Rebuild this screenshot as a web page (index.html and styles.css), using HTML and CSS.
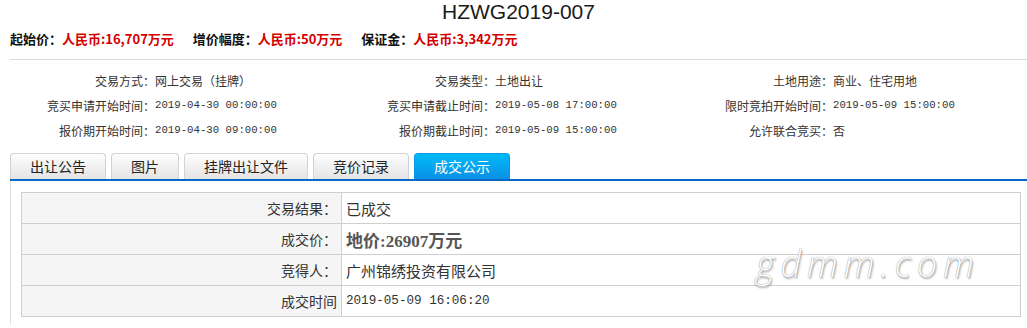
FILE: index.html
```html
<!DOCTYPE html>
<html>

<head>
    <title>HZWG2019-007</title>
    <link rel="stylesheet" href="styles.css">
</head>

<body>
    <div class="page">
        <h1 class="title">HZWG2019-007</h1>

        <div class="price-line">
            <span class="price-label">起始价：</span><span class="price-value">人民币:16,707万元</span>
            <span class="price-label">增价幅度：</span><span class="price-value">人民币:50万元</span>
            <span class="price-label">保证金：</span><span class="price-value">人民币:3,342万元</span>
        </div>

        <div class="info">
            <div class="info-label">交易方式：</div>
            <div class="info-value">网上交易（挂牌）</div>
            <div class="info-label">交易类型：</div>
            <div class="info-value">土地出让</div>
            <div class="info-label">土地用途：</div>
            <div class="info-value">商业、住宅用地</div>

            <div class="info-label">竞买申请开始时间：</div>
            <div class="info-value num">2019-04-30 00:00:00</div>
            <div class="info-label">竞买申请截止时间：</div>
            <div class="info-value num">2019-05-08 17:00:00</div>
            <div class="info-label">限时竞拍开始时间：</div>
            <div class="info-value num">2019-05-09 15:00:00</div>

            <div class="info-label">报价期开始时间：</div>
            <div class="info-value num">2019-04-30 09:00:00</div>
            <div class="info-label">报价期截止时间：</div>
            <div class="info-value num">2019-05-09 15:00:00</div>
            <div class="info-label">允许联合竞买：</div>
            <div class="info-value">否</div>
        </div>

        <ul class="tabs">
            <li class="tab">出让公告</li>
            <li class="tab">图片</li>
            <li class="tab">挂牌出让文件</li>
            <li class="tab">竞价记录</li>
            <li class="tab tab-active">成交公示</li>
        </ul>

        <div class="panel">
            <table class="result">
                <tr>
                    <td class="result-label">交易结果：</td>
                    <td class="result-value">已成交</td>
                </tr>
                <tr>
                    <td class="result-label">成交价：</td>
                    <td class="result-value"><span class="deal-price">地价:26907万元</span></td>
                </tr>
                <tr>
                    <td class="result-label">竞得人：</td>
                    <td class="result-value">广州锦绣投资有限公司</td>
                </tr>
                <tr>
                    <td class="result-label">成交时间</td>
                    <td class="result-value num-lg">2019-05-09 16:06:20</td>
                </tr>
            </table>
            <div class="watermark">gdmm.com</div>
        </div>
    </div>
</body>

</html>
```

FILE: styles.css
```css
body {
    margin: 0;
    background: #fff;
    color: #333;
    font-family: "Noto Sans CJK SC", "Noto Sans", sans-serif;
}

.page {
    padding-left: 10px;
}

.title {
    margin: 0;
    text-align: center;
    font-family: "Liberation Sans", "Noto Sans CJK SC", sans-serif;
    font-weight: normal;
    font-size: 21px;
    line-height: 24px;
    color: #1a1a1a;
}

.price-line {
    margin-top: 5px;
    height: 20px;
    line-height: 20px;
    font-size: 13px;
    font-weight: bold;
    white-space: nowrap;
}

.price-label {
    color: #111;
}

.price-value {
    color: #d40000;
    margin-right: 16px;
}

.info {
    margin-top: 10px;
    border-top: 1px solid #dcdcdc;
    padding-top: 8px;
    display: grid;
    grid-template-columns: 145px 195px 145px 193px 145px 1fr;
    grid-auto-rows: 25px;
    font-size: 12px;
    line-height: 25px;
    color: #333;
}

.info-label {
    text-align: right;
}

.num {
    font-family: "Liberation Mono", monospace;
    font-size: 10.7px;
}

.tabs {
    list-style: none;
    margin: 10px 0 0;
    padding: 0;
    display: flex;
    align-items: flex-end;
    border-bottom: 2px solid #0868c6;
}

.tab {
    height: 25px;
    line-height: 25px;
    padding: 0 19px;
    margin-right: 5px;
    font-size: 14px;
    color: #222;
    border: 1px solid #d2d2d2;
    border-bottom: none;
    border-radius: 4px 4px 0 0;
    background: linear-gradient(#fefefe, #e4e4e4);
}

.tab-active {
    color: #fff;
    border-color: #0a98e6;
    background: linear-gradient(#00bbf7, #0b8fe6);
}

.panel {
    position: relative;
    border-left: 1px solid #dedede;
    padding: 11px 0 8px 10px;
}

.result {
    width: 1000px;
    border-collapse: collapse;
    font-size: 14px;
    color: #333;
}

.result td {
    height: 30px;
    padding: 0;
    border: 1px solid #cfcfcf;
}

.result-label {
    width: 315px;
    padding-right: 4px !important;
    text-align: right;
    background: #f5f5f5;
}

.result-value {
    padding-left: 4px !important;
    font-size: 15px;
}

.deal-price {
    font-family: "Liberation Serif", "Noto Sans CJK SC", serif;
    font-weight: bold;
    font-size: 17px;
    color: #555;
}

.num-lg {
    font-family: "Liberation Mono", monospace;
    font-size: 12.6px;
}

.watermark {
    position: absolute;
    left: 745px;
    top: 58px;
    font-family: "Open Sans", sans-serif;
    font-style: italic;
    font-weight: 300;
    font-size: 36px;
    letter-spacing: 6px;
    color: #fff;
    text-shadow: 0 0 1px #777, 1px 2px 2px #aaa;
}
```
